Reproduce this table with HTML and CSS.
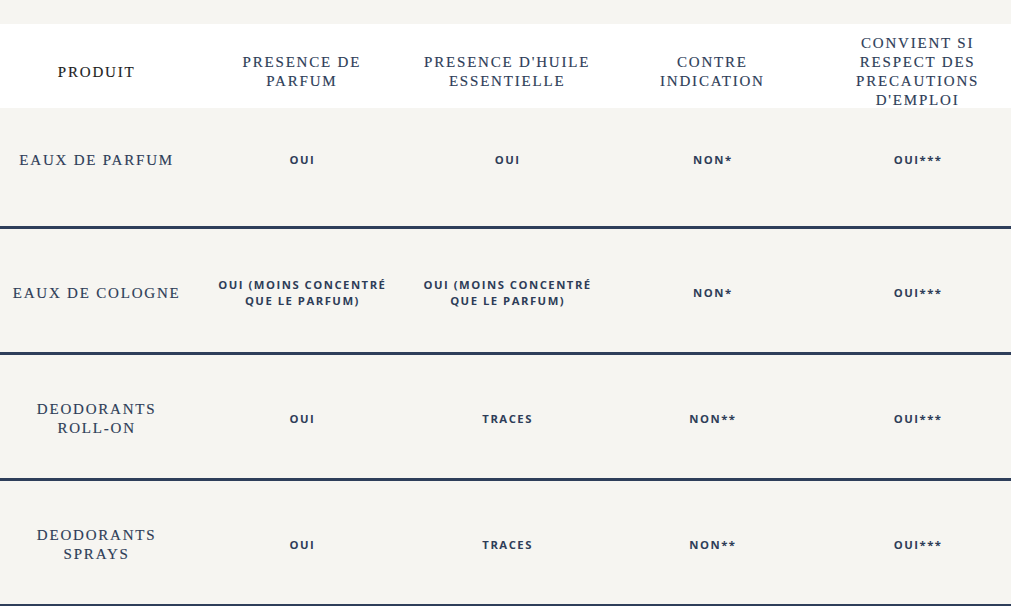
FILE: index.html
```html
<!DOCTYPE html>
<html lang="fr">
<head>
<meta charset="utf-8">
<title>Tableau produits</title>
<link rel="stylesheet" href="styles.css">
</head>
<body>
<div class="page">
  <div class="table">
    <div class="row head">
      <div class="cell h dark">PRODUIT</div>
      <div class="cell h">PRESENCE DE<br>PARFUM</div>
      <div class="cell h">PRESENCE D'HUILE<br>ESSENTIELLE</div>
      <div class="cell h">CONTRE<br>INDICATION</div>
      <div class="cell h">CONVIENT SI<br>RESPECT DES<br>PRECAUTIONS<br>D'EMPLOI</div>
    </div>
    <div class="row body first">
      <div class="cell name">EAUX DE PARFUM</div>
      <div class="cell v">OUI</div>
      <div class="cell v">OUI</div>
      <div class="cell v">NON*</div>
      <div class="cell v">OUI***</div>
    </div>
    <div class="row body">
      <div class="cell name">EAUX DE COLOGNE</div>
      <div class="cell v">OUI (MOINS CONCENTRÉ<br>QUE LE PARFUM)</div>
      <div class="cell v">OUI (MOINS CONCENTRÉ<br>QUE LE PARFUM)</div>
      <div class="cell v">NON*</div>
      <div class="cell v">OUI***</div>
    </div>
    <div class="row body">
      <div class="cell name">DEODORANTS<br>ROLL-ON</div>
      <div class="cell v">OUI</div>
      <div class="cell v">TRACES</div>
      <div class="cell v">NON**</div>
      <div class="cell v">OUI***</div>
    </div>
    <div class="row body">
      <div class="cell name">DEODORANTS<br>SPRAYS</div>
      <div class="cell v">OUI</div>
      <div class="cell v">TRACES</div>
      <div class="cell v">NON**</div>
      <div class="cell v">OUI***</div>
    </div>
  </div>
</div>
</body>
</html>
```

FILE: styles.css
```css
html, body {
  margin: 0;
  padding: 0;
  background: #f6f5f1;
}

.page {
  width: 1011px;
  height: 606px;
  overflow: hidden;
  padding-top: 24px;
  box-sizing: border-box;
}

.table {
  width: 1027px;
  margin-left: -6px;
  display: flex;
  flex-direction: column;
}

.row {
  display: grid;
  grid-template-columns: repeat(5, 205.25px);
  align-items: center;
  box-sizing: border-box;
}

.head {
  height: 84px;
  background: #ffffff;
  padding-top: 10px;
}

.body {
  height: 126px;
  border-bottom: 3px solid #2e3e5a;
  padding-top: 5px;
}

.body.first {
  height: 121px;
  padding-top: 0;
  padding-bottom: 14px;
}

.cell {
  text-align: center;
  color: #2e3d58;
}

.h, .name {
  font-family: "Liberation Serif", "Times New Roman", serif;
  font-size: 15px;
  letter-spacing: 1.8px;
  line-height: 19px;
  -webkit-text-stroke: 0.15px currentColor;
}

.h.dark {
  color: #1c1c1c;
}

.v {
  font-family: "Open Sans", "Noto Sans", sans-serif;
  font-weight: 700;
  font-size: 11.3px;
  letter-spacing: 1.5px;
  line-height: 16px;
  padding-left: 1px;
}
```
